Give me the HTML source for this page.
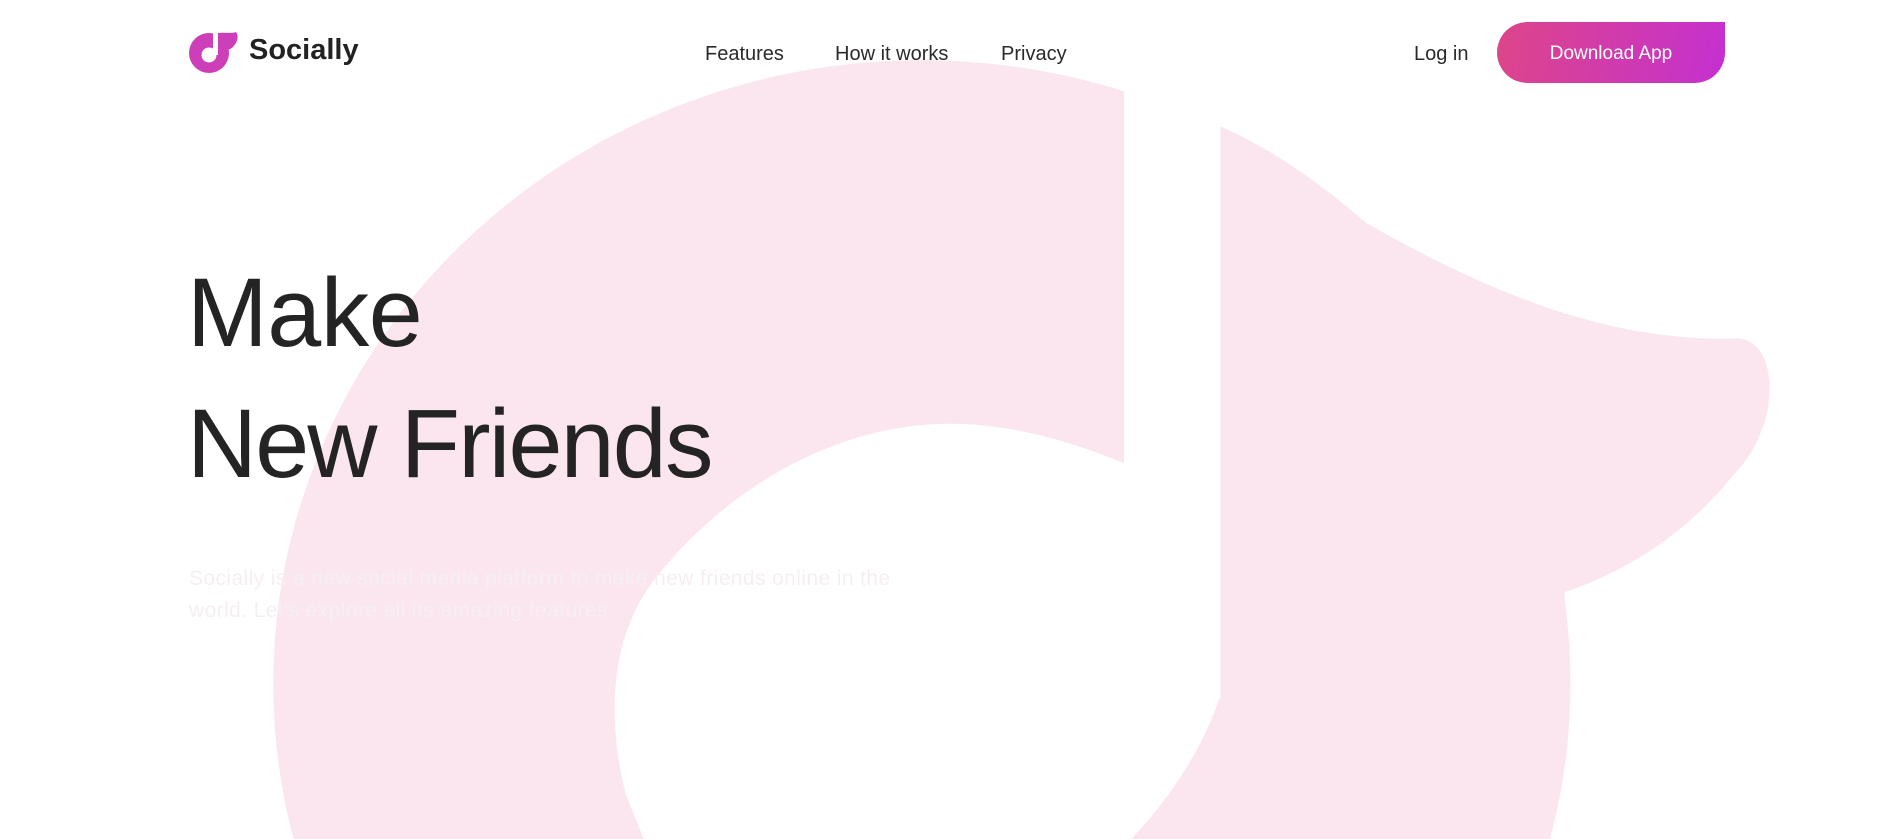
<!DOCTYPE html>
<html><head><meta charset="utf-8"><style>
*{margin:0;padding:0;box-sizing:border-box}
html,body{width:1887px;height:839px;overflow:hidden;background:#fff;font-family:"Liberation Sans",sans-serif;color:#222;position:relative}
svg.bg{position:absolute;left:0;top:0}
.abs{position:absolute;white-space:nowrap}
.nav{font-size:20px;color:#2a2a2a;top:43px}
.btn{left:1497px;top:22px;width:228px;height:61px;border-radius:31px 0 31px 31px;background:linear-gradient(100deg,#dd4688,#c430d0);color:#fff;font-size:19px;display:flex;align-items:center;justify-content:center;padding-top:2px}
h1{position:absolute;left:187px;font-weight:500;font-size:97px;line-height:110px;color:#242424;letter-spacing:-0.5px;white-space:nowrap}
p{position:absolute;left:189px;top:563px;font-size:21px;line-height:32px;color:#f5eff3;width:740px;letter-spacing:0.4px}
</style></head><body>
<svg class="bg" width="1887" height="839" viewBox="0 0 1568 697" preserveAspectRatio="none">
<ellipse cx="766" cy="568" rx="539" ry="518" fill="#fbe6ef"/>
<path d="M1014,105 C1060,125 1100,155 1135,185 C1240,245 1340,285 1445,281 C1472,285 1473,320 1468,345 C1462,365 1455,380 1440,395 C1400,445 1350,475 1300,492 L1305,568 L1014,568 Z" fill="#fbe6ef"/>
<rect x="934" y="0" width="80" height="580" fill="#fff"/>
<path d="M934,385 C880,362 830,352 790,352 C690,352 600,410 545,480 C505,530 505,600 520,660 L535,697 L940,697 C975,660 1000,620 1014,578 L1014,380 Z" fill="#fff"/>
</svg>
<svg class="abs" style="left:188px;top:30px" width="54" height="44" viewBox="0 0 54 44">
<circle cx="21" cy="23" r="20" fill="#cc3fb8"/>
<path d="M30,3 C36,2 42,4 48,2 C51,6 50,12 44,18 L40,20 L30,20 Z" fill="#cc3fb8"/>
<circle cx="21" cy="25" r="7.5" fill="#fff"/>
<rect x="25" y="0" width="5" height="25" fill="#fff"/>
</svg>
<div class="abs" style="left:249px;top:34px;font-size:29px;font-weight:bold;color:#222">Socially</div>
<div class="abs nav" style="left:705px">Features</div>
<div class="abs nav" style="left:835px">How it works</div>
<div class="abs nav" style="left:1001px">Privacy</div>
<div class="abs nav" style="left:1414px">Log in</div>
<div class="abs btn">Download App</div>
<h1 style="top:258px">Make</h1>
<h1 style="top:389px;letter-spacing:-1.8px">New Friends</h1>
<p>Socially is a new social media platform to make new friends online in the world. Let's explore all its amazing features.</p>
</body></html>
